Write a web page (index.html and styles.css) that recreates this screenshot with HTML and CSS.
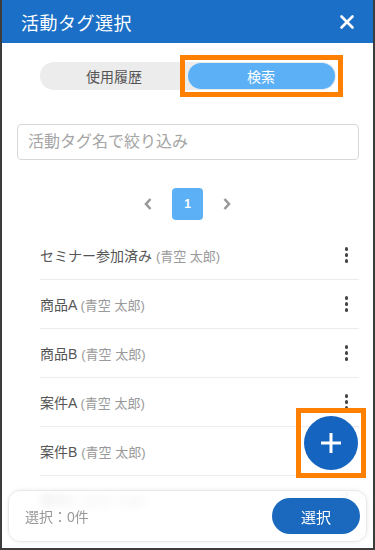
FILE: index.html
```html
<!DOCTYPE html>
<html lang="ja">

<head>
    <meta charset="UTF-8">
    <meta name="viewport" content="width=device-width, initial-scale=1.0">
    <title>活動タグ選択</title>
    <link rel="stylesheet" href="styles.css">
</head>

<body>
    <div class="screen">
        <header class="header">
            <h1>活動タグ選択</h1>
            <button type="button" class="close-btn" aria-label="閉じる">
                <svg width="16" height="16" viewBox="0 0 16 16">
                    <path d="M2.5 2.5 L13.5 13.5 M13.5 2.5 L2.5 13.5" stroke="#fff" stroke-width="2.6" stroke-linecap="round" />
                </svg>
            </button>
        </header>

        <div class="segment">
            <button type="button" class="segment-item">使用履歴</button>
            <button type="button" class="segment-item active marked">検索</button>
        </div>

        <div class="search">
            <input type="text" placeholder="活動タグ名で絞り込み">
        </div>

        <div class="pager">
            <span class="pager-arrow">
                <svg width="10" height="14" viewBox="0 0 10 14">
                    <path d="M7.5 2 L3 7 L7.5 12" fill="none" stroke="#999" stroke-width="2.6" />
                </svg>
            </span>
            <span class="pager-page">1</span>
            <span class="pager-arrow">
                <svg width="10" height="14" viewBox="0 0 10 14">
                    <path d="M2.5 2 L7 7 L2.5 12" fill="none" stroke="#999" stroke-width="2.6" />
                </svg>
            </span>
        </div>

        <ul class="tag-list">
            <li class="tag-row">
                <span class="tag-name">セミナー参加済み <small>(青空 太郎)</small></span>
                <span class="kebab"><i></i><i></i><i></i></span>
            </li>
            <li class="tag-row">
                <span class="tag-name">商品A <small>(青空 太郎)</small></span>
                <span class="kebab"><i></i><i></i><i></i></span>
            </li>
            <li class="tag-row">
                <span class="tag-name">商品B <small>(青空 太郎)</small></span>
                <span class="kebab"><i></i><i></i><i></i></span>
            </li>
            <li class="tag-row">
                <span class="tag-name">案件A <small>(青空 太郎)</small></span>
                <span class="kebab"><i></i><i></i><i></i></span>
            </li>
            <li class="tag-row">
                <span class="tag-name">案件B <small>(青空 太郎)</small></span>
                <span class="kebab"><i></i><i></i><i></i></span>
            </li>
            <li class="tag-row">
                <span class="tag-name">案件C <small>(青空 太郎)</small></span>
                <span class="kebab"><i></i><i></i><i></i></span>
            </li>
        </ul>

        <button type="button" class="fab marked" aria-label="追加">
            <svg width="24" height="24" viewBox="0 0 24 24">
                <path d="M12 2 V22 M2 12 H22" stroke="#fff" stroke-width="3" />
            </svg>
        </button>

        <div class="footer">
            <span class="count">選択：0件</span>
            <button type="button" class="select-btn">選択</button>
        </div>
    </div>
</body>

</html>
```

FILE: styles.css
```css
body {
    margin: 0;
    padding: 0;
    font-family: "Liberation Sans", "Noto Sans CJK JP", sans-serif;
    background-color: #fff;
    color: #555;
}

.screen {
    position: relative;
    width: 375px;
    height: 550px;
    box-sizing: border-box;
    border: 2px solid #3c3c3c;
    border-top: none;
    overflow: hidden;
    background: #fff;
}

/* Header */
.header {
    display: flex;
    align-items: center;
    justify-content: space-between;
    height: 43px;
    margin: 0 -2px;
    padding: 0 20px 0 21px;
    background-color: #1b6fc6;
    color: #fff;
}

.header h1 {
    margin: 0;
    font-size: 18px;
    font-weight: normal;
    letter-spacing: 0.5px;
}

.close-btn {
    display: flex;
    padding: 0;
    border: none;
    background: none;
}

/* Orange highlight frame */
.marked::after {
    content: "";
    position: absolute;
    top: -8px;
    right: -8px;
    bottom: -8px;
    left: -8px;
    border: 5px solid #ff8000;
    pointer-events: none;
}

/* Segmented control */
.segment {
    display: flex;
    width: 294px;
    margin: 19px auto 0;
    padding: 1px;
    background-color: #ececec;
    border-radius: 14px;
}

.segment-item {
    position: relative;
    flex: 1;
    height: 26px;
    border: none;
    border-radius: 13px;
    background: none;
    font-family: inherit;
    font-size: 14px;
    color: #555;
}

.segment-item.active {
    background-color: #5cb0f5;
    color: #fff;
}

/* Search */
.search {
    padding: 34px 14px 0 15px;
}

.search input {
    width: 100%;
    height: 36px;
    box-sizing: border-box;
    padding: 0 10px;
    border: 1px solid #d8d8d8;
    border-radius: 4px;
    font-family: inherit;
    font-size: 16px;
    color: #555;
}

.search input::placeholder {
    color: #a5a5a5;
}

/* Pagination */
.pager {
    display: flex;
    justify-content: center;
    align-items: center;
    gap: 19px;
    margin-top: 28px;
}

.pager-arrow {
    display: flex;
    width: 10px;
}

.pager-page {
    display: flex;
    align-items: center;
    justify-content: center;
    width: 31px;
    height: 32px;
    background-color: #5cb0f5;
    border-radius: 4px;
    color: #fff;
    font-size: 12px;
    font-weight: bold;
}

/* Tag list */
.tag-list {
    list-style: none;
    margin: 11px 14px 0 38px;
    padding: 0;
}

.tag-row {
    display: flex;
    align-items: center;
    justify-content: space-between;
    height: 48px;
    border-bottom: 1px solid #ececec;
    font-size: 14px;
}

.tag-name small {
    font-size: 13px;
    color: #999;
}

.kebab {
    display: flex;
    flex-direction: column;
    gap: 2.5px;
    padding-right: 11px;
}

.kebab i {
    display: block;
    width: 3.5px;
    height: 3.5px;
    border-radius: 50%;
    background-color: #444;
}

/* Floating add button */
.fab {
    position: absolute;
    left: 302px;
    top: 416px;
    display: flex;
    align-items: center;
    justify-content: center;
    width: 54px;
    height: 54px;
    padding: 0;
    border: none;
    border-radius: 50%;
    background-color: #1565c0;
}

/* Bottom bar */
.footer {
    position: absolute;
    left: 6px;
    right: 6px;
    top: 490px;
    height: 52px;
    display: flex;
    align-items: center;
    justify-content: space-between;
    padding: 0 6px 0 16px;
    box-sizing: border-box;
    background: rgba(255, 255, 255, 0.85);
    backdrop-filter: blur(4px);
    border: 1px solid #e8e8e8;
    border-radius: 12px;
    box-shadow: 0 0 4px rgba(0, 0, 0, 0.08);
}

.count {
    font-size: 14px;
    color: #999;
}

.select-btn {
    width: 88px;
    height: 36px;
    border: none;
    border-radius: 18px;
    background-color: #1a69bf;
    color: #fff;
    font-family: inherit;
    font-size: 15px;
}
```
